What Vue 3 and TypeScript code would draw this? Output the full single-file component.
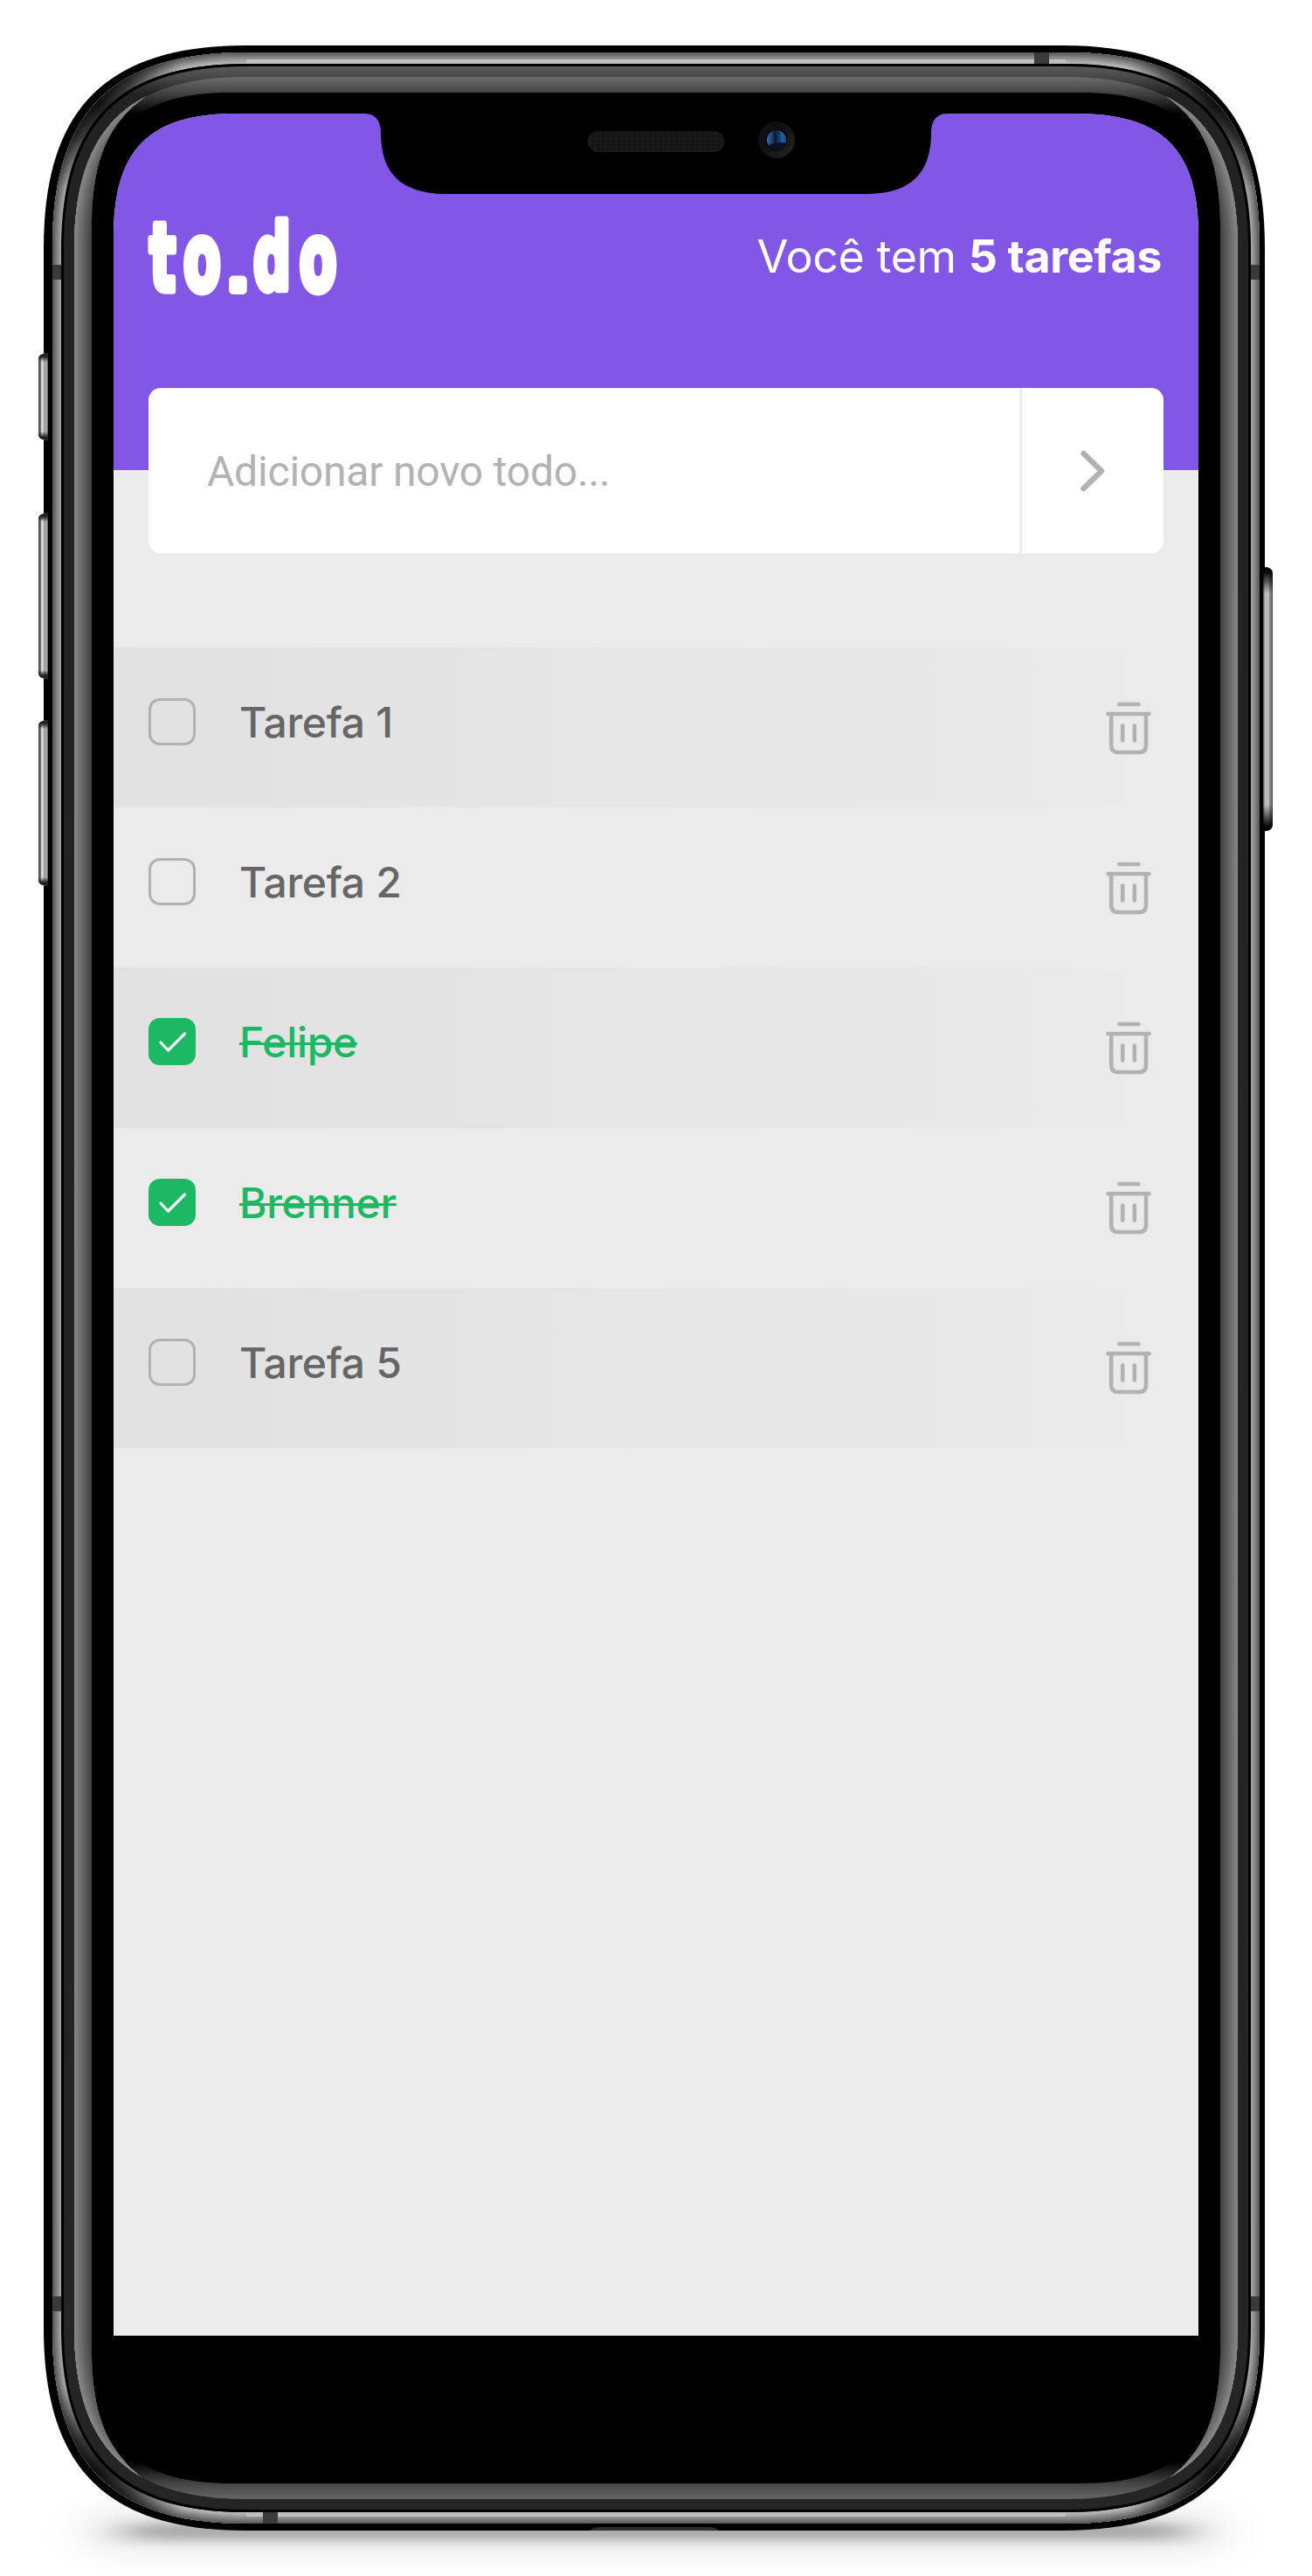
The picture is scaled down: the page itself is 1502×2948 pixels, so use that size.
<script setup lang="ts">
interface Task {
  id: number
  title: string
  done: boolean
}

const tasks: Task[] = [
  { id: 1, title: 'Tarefa 1', done: false },
  { id: 2, title: 'Tarefa 2', done: false },
  { id: 3, title: 'Felipe', done: true },
  { id: 4, title: 'Brenner', done: true },
  { id: 5, title: 'Tarefa 5', done: false },
]

/** Rounded box with continuous-curvature corners. */
function squircle(l: number, t: number, r: number, b: number, rad: number, k = 0.69): string {
  const c = rad * (1 - k)
  return (
    `M${l} ${t + rad}C${l} ${t + c} ${l + c} ${t} ${l + rad} ${t}` +
    `H${r - rad}C${r - c} ${t} ${r} ${t + c} ${r} ${t + rad}` +
    `V${b - rad}C${r} ${b - c} ${r - c} ${b} ${r - rad} ${b}` +
    `H${l + rad}C${l + c} ${b} ${l} ${b - c} ${l} ${b - rad}Z`
  )
}

const body = squircle(50, 52, 1448, 2896, 232)
const metal = squircle(60, 60, 1442, 2888, 222)
const groove = squircle(70, 73, 1432, 2875, 212)
const rim = squircle(73, 76, 1429, 2872, 209)
const bevel = squircle(85, 88, 1417, 2860, 197)
const glass = squircle(105, 106, 1397, 2842, 158)

/* Side highlights of the bevel, tapering into the corners. */
const crescents =
  'M80 100H167V110C125 140 105 180 105 260V2688C105 2768 125 2808 167 2839V2850H80Z' +
  'M1422 100H1335V110C1377 140 1397 180 1397 260V2688C1397 2768 1377 2808 1335 2839V2850H1422Z'

function ramp(steps: number, width: number, from: number, to: number) {
  return Array.from({ length: steps }, (_, i) => {
    const p = 1 - i / (steps - 1)
    const v = Math.round(from + (to - from) * p)
    return { w: (2 * width * (steps - i)) / steps, c: `rgb(${v},${v},${v})` }
  })
}
const bevelRamp = ramp(20, 20, 134, 66)
const metalRamp = ramp(10, 13, 92, 188)
</script>

<template>
  <main class="stage">
    <svg class="frame" width="1502" height="2948" viewBox="0 0 1502 2948" aria-hidden="true">
      <defs>
        <linearGradient id="rimFill" gradientUnits="userSpaceOnUse" x1="0" y1="76" x2="0" y2="2872">
          <stop offset="0" stop-color="#5a5a5a" />
          <stop offset="0.0045" stop-color="#484848" />
          <stop offset="0.011" stop-color="#222" />
          <stop offset="1" stop-color="#252525" />
        </linearGradient>
        <linearGradient id="bevelFill" gradientUnits="userSpaceOnUse" x1="0" y1="88" x2="0" y2="2860">
          <stop offset="0" stop-color="#6c6c6c" />
          <stop offset="0.0065" stop-color="#444" />
          <stop offset="0.0155" stop-color="#000" />
          <stop offset="0.9845" stop-color="#000" />
          <stop offset="0.9935" stop-color="#444" />
          <stop offset="1" stop-color="#666" />
        </linearGradient>
        <radialGradient id="shade">
          <stop offset="0" stop-color="#000" stop-opacity="0.85" />
          <stop offset="0.4" stop-color="#000" stop-opacity="0.65" />
          <stop offset="1" stop-color="#000" stop-opacity="0" />
        </radialGradient>
        <linearGradient id="keyL" x1="0" x2="1" y1="0" y2="0">
          <stop offset="0" stop-color="#444" />
          <stop offset="0.25" stop-color="#777" />
          <stop offset="0.3" stop-color="#d4d4d4" />
          <stop offset="0.52" stop-color="#d4d4d4" />
          <stop offset="0.56" stop-color="#999" />
          <stop offset="0.88" stop-color="#aaa" />
          <stop offset="1" stop-color="#444" />
        </linearGradient>
        <linearGradient id="keyR" x1="0" x2="1" y1="0" y2="0">
          <stop offset="0" stop-color="#444" />
          <stop offset="0.2" stop-color="#bbb" />
          <stop offset="0.6" stop-color="#bbb" />
          <stop offset="0.65" stop-color="#888" />
          <stop offset="0.9" stop-color="#777" />
          <stop offset="1" stop-color="#222" />
        </linearGradient>
        <linearGradient id="keyTop" x1="0" x2="0" y1="0" y2="1">
          <stop offset="0.4" stop-color="#222" />
          <stop offset="1" stop-color="#222" stop-opacity="0" />
        </linearGradient>
        <linearGradient id="keyEnd" x1="0" x2="0" y1="0" y2="1">
          <stop offset="0" stop-color="#000" stop-opacity="0" />
          <stop offset="0.85" stop-color="#000" />
        </linearGradient>
        <clipPath id="bevelClip"><path :d="bevel" /></clipPath>
        <clipPath id="crescentClip"><path :d="crescents" /></clipPath>
        <clipPath id="metalClip"><path :d="metal" /></clipPath>
        <filter id="soft" x="-20%" y="-200%" width="140%" height="500%">
          <feGaussianBlur stdDeviation="26 7" />
        </filter>
        <filter id="softer" x="-20%" y="-200%" width="140%" height="500%">
          <feGaussianBlur stdDeviation="30 18" />
        </filter>
      </defs>

      <rect x="95" y="2874" width="1310" height="46" rx="23" fill="#000" opacity="0.09" filter="url(#softer)" />
      <rect x="145" y="2888" width="1212" height="18" rx="9" fill="#000" opacity="0.32" filter="url(#soft)" />

      <path :d="body" />
      <path d="M675 2896Q680 2892 686 2892H812Q818 2892 823 2896Z" fill="#2e2e2e" />
      <g clip-path="url(#metalClip)">
        <path
          v-for="s in metalRamp"
          :key="s.w"
          :d="metal"
          fill="none"
          :stroke="s.c"
          :stroke-width="s.w"
        />
        <path d="M282 70.5H1220M282 2877.5H1220" stroke="#c0bec0" stroke-width="5" />
        <circle cx="112" cy="120" r="105" fill="url(#shade)" />
        <circle cx="1390" cy="120" r="105" fill="url(#shade)" />
        <circle cx="112" cy="2828" r="105" fill="url(#shade)" />
        <circle cx="1390" cy="2828" r="105" fill="url(#shade)" />
      </g>
      <g fill="#3a3a3a">
        <rect x="60" y="303" width="10" height="17" />
        <rect x="1432" y="303" width="10" height="17" />
        <rect x="60" y="2628" width="10" height="17" />
        <rect x="1432" y="2628" width="10" height="17" />
        <rect x="1184" y="60" width="17" height="13" />
        <rect x="301" y="2875" width="17" height="13" />
      </g>
      <path :d="groove" />
      <path :d="rim" fill="url(#rimFill)" />
      <path :d="bevel" fill="url(#bevelFill)" />
      <path :d="glass" />
      <g clip-path="url(#crescentClip)">
        <g clip-path="url(#bevelClip)">
          <path
            v-for="s in bevelRamp"
            :key="s.w"
            :d="bevel"
            fill="none"
            :stroke="s.c"
            :stroke-width="s.w"
          />
        </g>
      </g>

      <g v-for="k in [[404, 100], [587, 190], [824, 190]]" :key="k[0]" :transform="`translate(44 ${k[0]})`">
        <path :d="`M11 0C5 0 0 2 0 7V${k[1] - 7}C0 ${k[1] - 2} 5 ${k[1]} 11 ${k[1]}Z`" fill="url(#keyL)" />
        <path d="M11 0C5 0 0 2 0 7V10H11Z" fill="url(#keyTop)" />
        <path d="M11 0C5 0 0 2 0 7V10H11Z" fill="url(#keyTop)" :transform="`matrix(1 0 0 -1 0 ${k[1]})`" />
      </g>
      <g transform="translate(1446 649)">
        <path d="M0 0H2C8 0 11 3 11 8V294C11 299 8 302 2 302H0Z" fill="url(#keyR)" />
        <path d="M0 272H11V294C11 299 8 302 2 302H0Z" fill="url(#keyEnd)" />
        <path d="M0 272H11V294C11 299 8 302 2 302H0Z" fill="url(#keyEnd)" transform="matrix(1 0 0 -1 0 302)" />
      </g>
    </svg>

    <section class="screen">
      <header class="top">
        <h1 class="logo">
          <svg width="230" height="110" viewBox="0 0 230 110">
            <text class="logo-text" transform="scale(0.58 1)" x="2 69" y="97.5">to</text>
            <text class="logo-text logo-dot" x="91" y="97.5">.</text>
            <text class="logo-text" transform="scale(0.58 1)" x="207 298" y="97.5"><tspan class="logo-d">d</tspan>o</text>
          </svg>
        </h1>
        <p class="count">Você tem <b>5 tarefas</b></p>
      </header>

      <form class="entry">
        <span class="placeholder">Adicionar novo todo...</span>
        <button type="button" class="send" aria-label="Adicionar">
          <svg width="36" height="54" viewBox="0 0 36 54">
            <path d="M7.5 7L28 27L7.5 47" />
          </svg>
        </button>
      </form>

      <ul class="list">
        <li v-for="task in tasks" :key="task.id" class="row" :class="{ done: task.done }">
          <span class="box">
            <svg v-if="task.done" width="54" height="54" viewBox="0 0 54 54">
              <path d="M14 28L22.5 37L41.5 18" />
            </svg>
          </span>
          <span class="title">{{ task.title }}</span>
          <svg class="trash" width="56" height="66" viewBox="0 0 56 66">
            <path d="M17.3 7H39.5M4.5 18H51.5M8.2 18V54Q8.2 62 16 62H40Q48 62 48 54V18M21.2 31.5V48.5M34.8 31.5V48.5" />
          </svg>
        </li>
      </ul>
    </section>

    <svg class="notch" width="668" height="94" viewBox="0 0 668 94" aria-hidden="true">
      <defs>
        <pattern id="mesh" width="6" height="5" patternUnits="userSpaceOnUse">
          <rect width="6" height="5" fill="#141414" />
          <path d="M0 0.5H6M0.5 0V5" stroke="#1c1c1c" />
        </pattern>
        <linearGradient id="ring" x1="0" y1="0" x2="1" y2="1">
          <stop offset="0.4" stop-color="#101010" />
          <stop offset="1" stop-color="#262626" />
        </linearGradient>
        <linearGradient id="lens" x1="0" y1="0" x2="1" y2="0">
          <stop offset="0" stop-color="#2f6da8" />
          <stop offset="0.25" stop-color="#1b4474" />
          <stop offset="0.42" stop-color="#0d1730" />
          <stop offset="0.6" stop-color="#15355f" />
          <stop offset="0.8" stop-color="#2060a0" />
          <stop offset="1" stop-color="#1c4f88" />
        </linearGradient>
      </defs>
      <path d="M0 0V2C12 2 19 9 19 24C19 70 42 94 94 94H574C626 94 649 70 649 24C649 9 656 2 668 2V0Z" />
      <rect x="256" y="22" width="156" height="24" rx="12" fill="#1c1c1c" />
      <rect x="257" y="22" width="154" height="22" rx="11" fill="url(#mesh)" />
      <circle cx="472" cy="32" r="21" fill="url(#ring)" />
      <circle cx="472" cy="32" r="12.5" fill="#080808" />
      <circle cx="472" cy="32" r="11" fill="url(#lens)" />
      <path d="M463 38Q472 34 482.5 35.5Q480 43 472 43Q466 43 463 38Z" fill="#0a1128" />
    </svg>
  </main>
</template>

<style>
body {
  margin: 0;
  background: #fff;
}
</style>

<style scoped>
.stage {
  position: relative;
  box-sizing: border-box;
  width: 1502px;
  height: 2948px;
  padding: 130px;
  overflow: hidden;
}
.frame {
  position: absolute;
  left: 0;
  top: 0;
}
.notch {
  position: absolute;
  left: 417px;
  top: 128px;
}
.screen {
  position: relative;
  width: 1242px;
  height: 2543px;
  background: #ebebeb;
  font-family: Inter, sans-serif;
  clip-path: path('M0 140C0 41 41 0 140 0H1102C1201 0 1242 41 1242 140V2543H0Z');
}
.top {
  display: flex;
  justify-content: space-between;
  box-sizing: border-box;
  height: 408.4px;
  padding: 104px 42px 0 40px;
  background: #8257e5;
  color: #fff;
}
.logo {
  margin: 0;
  height: 110px;
}
.logo svg {
  display: block;
  overflow: visible;
}
.logo-text {
  font: 700 107px 'DejaVu Sans', sans-serif;
  fill: #fff;
  stroke: #fff;
  stroke-width: 9px;
  stroke-linejoin: round;
}
.logo-dot {
  font-size: 60px;
  stroke-width: 10px;
}
.logo-d {
  font-size: 103px;
}
.count {
  margin: 28px 0 0;
  font-size: 52px;
  line-height: 64px;
  letter-spacing: -0.42px;
  white-space: nowrap;
}
.count b {
  font-weight: 700;
}
.entry {
  display: flex;
  align-items: stretch;
  justify-content: space-between;
  height: 188.5px;
  margin: -94.4px 40px 0;
  background: #fff;
  border-radius: 14px;
  overflow: hidden;
}
.placeholder {
  padding-left: 67px;
  font-family: Roboto, sans-serif;
  font-size: 48px;
  line-height: 191px;
  letter-spacing: -0.2px;
  color: #b2b2b2;
  white-space: nowrap;
}
.send {
  display: flex;
  align-items: center;
  justify-content: center;
  box-sizing: border-box;
  width: 165px;
  padding: 1px 0 0;
  border: 0;
  border-left: 3px solid #ebebeb;
  background: none;
}
.send path {
  fill: none;
  stroke: #b2b2b2;
  stroke-width: 6.5;
  stroke-linecap: round;
  stroke-linejoin: round;
}
.list {
  margin: 108.5px 0 0;
  padding: 0;
  list-style: none;
}
.row {
  display: flex;
  align-items: flex-start;
  box-sizing: border-box;
  height: 183.2px;
  padding: 58px 52px 0 40px;
}
.row:nth-child(odd) {
  background: linear-gradient(90deg, #e1e1e1, #ebebeb);
}
.box {
  box-sizing: border-box;
  width: 54px;
  height: 54px;
  border: 3px solid #b2b2b2;
  border-radius: 13px;
}
.done .box {
  border: 0;
  background: #1db863;
}
.box svg {
  display: block;
}
.box path {
  fill: none;
  stroke: #fff;
  stroke-width: 3.2;
  stroke-linecap: round;
  stroke-linejoin: round;
}
.title {
  margin-left: 50px;
  font-size: 48px;
  font-weight: 500;
  line-height: 56px;
  letter-spacing: -0.3px;
  color: #666;
}
.done .title {
  color: #1db863;
  text-decoration: line-through;
  text-decoration-thickness: 3px;
}
.trash {
  margin: -0.5px 0 0 auto;
}
.trash path {
  fill: none;
  stroke: #b2b2b2;
  stroke-width: 4.6;
  stroke-linecap: round;
}
</style>
